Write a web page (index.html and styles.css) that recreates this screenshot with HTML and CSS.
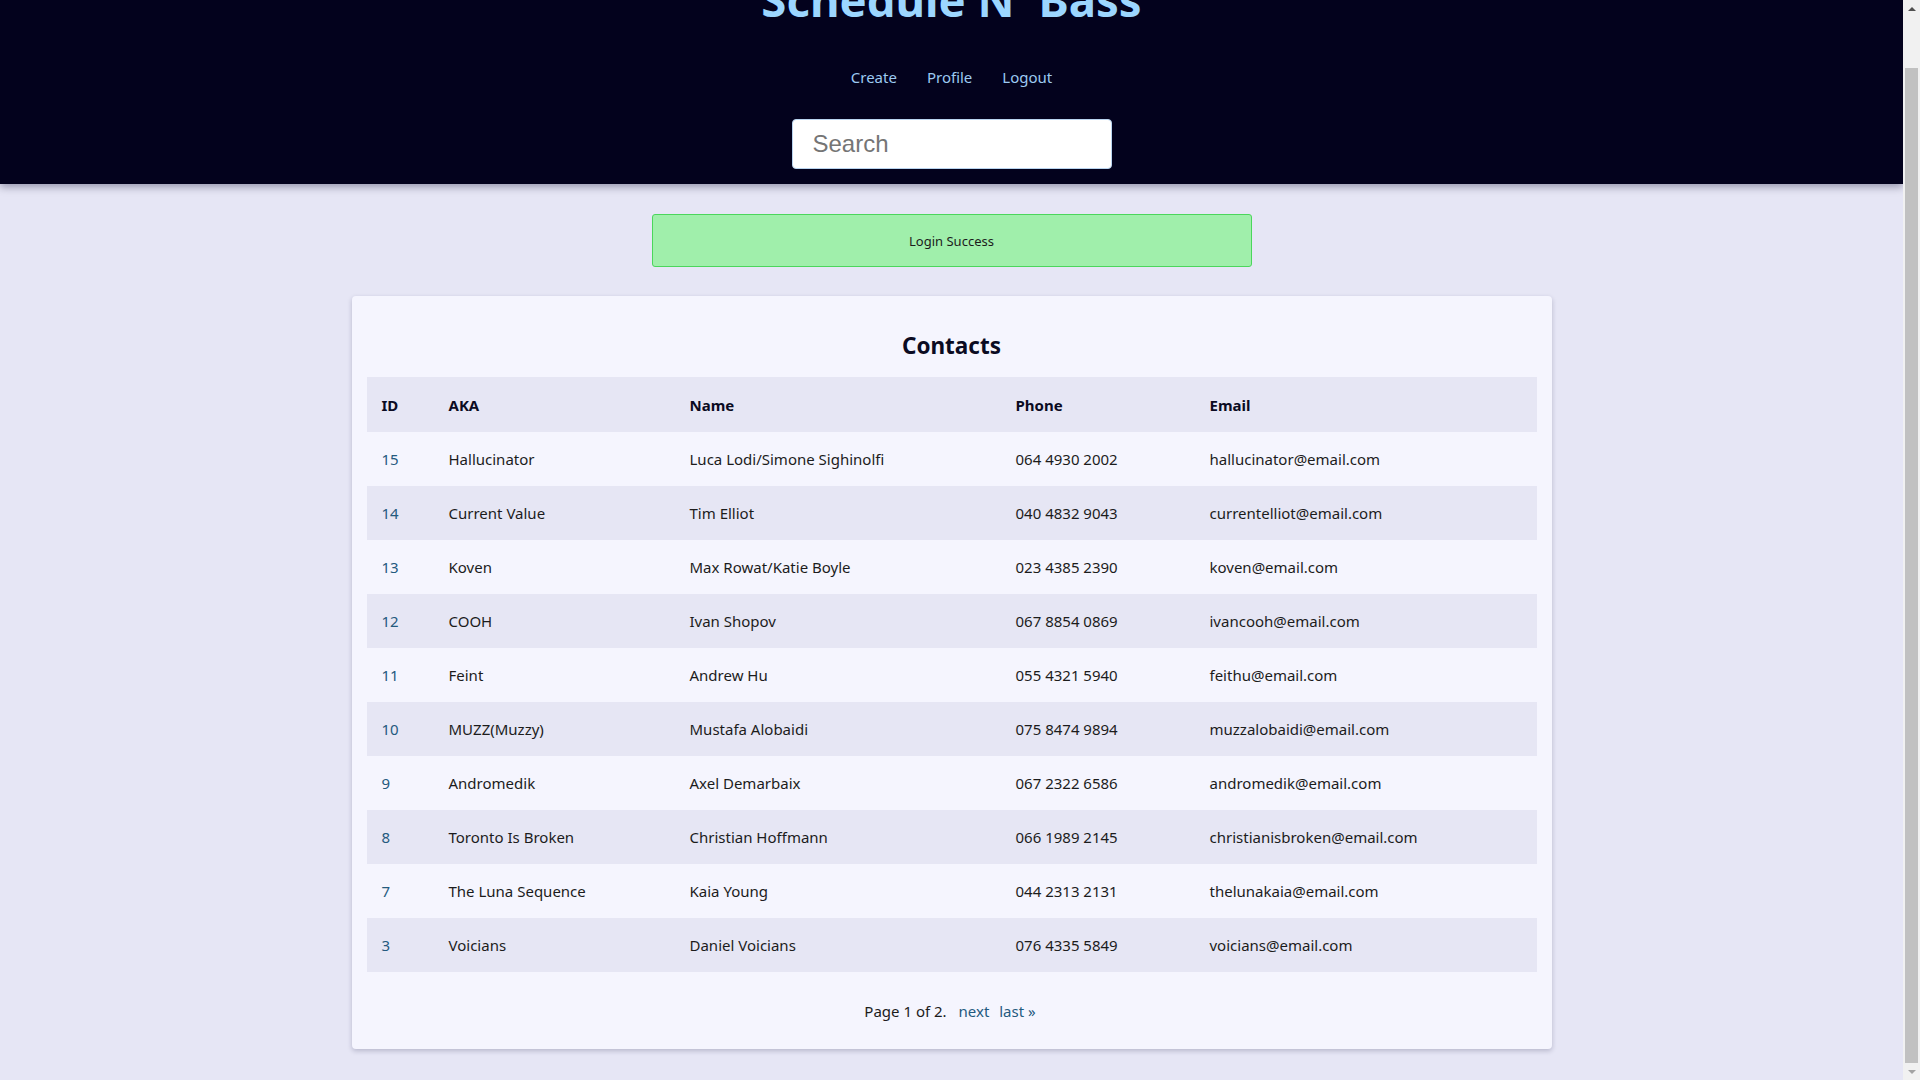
FILE: index.html
```html
<!DOCTYPE html>
<html lang="en">
<head>
<meta charset="utf-8">
<title>Schedule N' Bass</title>
<link rel="stylesheet" href="styles.css">
</head>
<body>
<header class="site-header">
  <h1 class="site-title">Schedule N' Bass</h1>
  <nav class="site-nav">
    <a href="#">Create</a>
    <a href="#">Profile</a>
    <a href="#">Logout</a>
  </nav>
  <form class="search-form">
    <input class="search-input" type="text" placeholder="Search">
  </form>
</header>
<main class="main">
  <div class="alert-success">Login Success</div>
  <section class="card">
    <h2 class="card-title">Contacts</h2>
    <table class="contacts">
      <colgroup>
        <col class="c-id"><col class="c-aka"><col class="c-name"><col class="c-phone"><col class="c-email">
      </colgroup>
      <thead>
        <tr><th>ID</th><th>AKA</th><th>Name</th><th>Phone</th><th>Email</th></tr>
      </thead>
      <tbody>
        <tr><td><a href="#">15</a></td><td>Hallucinator</td><td>Luca Lodi/Simone Sighinolfi</td><td>064 4930 2002</td><td>hallucinator@email.com</td></tr>
        <tr><td><a href="#">14</a></td><td>Current Value</td><td>Tim Elliot</td><td>040 4832 9043</td><td>currentelliot@email.com</td></tr>
        <tr><td><a href="#">13</a></td><td>Koven</td><td>Max Rowat/Katie Boyle</td><td>023 4385 2390</td><td>koven@email.com</td></tr>
        <tr><td><a href="#">12</a></td><td>COOH</td><td>Ivan Shopov</td><td>067 8854 0869</td><td>ivancooh@email.com</td></tr>
        <tr><td><a href="#">11</a></td><td>Feint</td><td>Andrew Hu</td><td>055 4321 5940</td><td>feithu@email.com</td></tr>
        <tr><td><a href="#">10</a></td><td>MUZZ(Muzzy)</td><td>Mustafa Alobaidi</td><td>075 8474 9894</td><td>muzzalobaidi@email.com</td></tr>
        <tr><td><a href="#">9</a></td><td>Andromedik</td><td>Axel Demarbaix</td><td>067 2322 6586</td><td>andromedik@email.com</td></tr>
        <tr><td><a href="#">8</a></td><td>Toronto Is Broken</td><td>Christian Hoffmann</td><td>066 1989 2145</td><td>christianisbroken@email.com</td></tr>
        <tr><td><a href="#">7</a></td><td>The Luna Sequence</td><td>Kaia Young</td><td>044 2313 2131</td><td>thelunakaia@email.com</td></tr>
        <tr><td><a href="#">3</a></td><td>Voicians</td><td>Daniel Voicians</td><td>076 4335 5849</td><td>voicians@email.com</td></tr>
      </tbody>
    </table>
    <div class="pagination">
      <span class="current">Page 1 of 2.</span>
      <a href="#">next</a>
      <a href="#">last &raquo;</a>
    </div>
  </section>
</main>
<div class="scrollbar" aria-hidden="true">
  <div class="sb-btn sb-up"><span class="arrow-up"></span></div>
  <div class="sb-track"><div class="sb-thumb"></div></div>
  <div class="sb-btn sb-down"><span class="arrow-down"></span></div>
</div>
<script src="script.js"></script>
</body>
</html>
```
FILE: styles.css
```css
html, body {
  margin: 0;
  padding: 0;
}
body {
  background: #e6e6f5;
  font-family: "Noto Sans", "Open Sans", sans-serif;
  font-size: 16px;
  color: #1c1c1c;
  margin-right: 17px;
}
a {
  text-decoration: none;
}
.site-header {
  background: #03021d;
  padding: 22px 0 15px;
  text-align: center;
  box-shadow: 0 3px 8px rgba(0, 0, 40, 0.35);
  position: relative;
  z-index: 1;
}
.site-title {
  margin: 0;
  font-size: 45.5px;
  line-height: 64px;
  font-weight: 700;
  color: #9cd6ff;
}
.site-nav {
  margin-top: 35px;
  display: flex;
  justify-content: center;
  gap: 30px;
  line-height: 22px;
  font-size: 15px;
}
.site-nav a {
  color: #9ccaf2;
}
.search-form {
  margin: 31px 0 0;
  display: flex;
  justify-content: center;
}
.search-input {
  box-sizing: border-box;
  width: 320px;
  height: 50px;
  padding: 0 20px;
  border: 1px solid #b9d4ef;
  border-radius: 4px;
  background: #fff;
  font-family: "Liberation Sans", Arial, sans-serif;
  font-size: 24px;
  color: #222;
  outline: none;
}
.search-input::placeholder {
  color: #757575;
}
.main {
  padding: 30px 0 31px;
  display: flex;
  flex-direction: column;
  align-items: center;
}
.alert-success {
  box-sizing: border-box;
  width: 600px;
  height: 53px;
  margin-bottom: 29px;
  background: #a0efab;
  border: 1px solid #4bd65c;
  border-radius: 3px;
  display: flex;
  align-items: center;
  justify-content: center;
  font-size: 13px;
  color: #1c1c1c;
}
.card {
  box-sizing: border-box;
  width: 1200px;
  padding: 15px 15px 15px;
  background: #f5f5fe;
  border-radius: 4px;
  box-shadow: 0 2px 5px rgba(20, 20, 60, 0.22);
}
.card-title {
  margin: 19px 0 15px;
  text-align: center;
  font-size: 22.5px;
  line-height: 32px;
  font-weight: 700;
  color: #0b0b22;
}
.contacts {
  width: 100%;
  border-collapse: collapse;
  table-layout: fixed;
}
.c-id { width: 67px; }
.c-aka { width: 241px; }
.c-name { width: 326px; }
.c-phone { width: 194px; }
.c-email { width: 342px; }
.contacts th,
.contacts td {
  padding: 16px 15px;
  line-height: 22px;
  text-align: left;
  font-size: 15px;
  white-space: nowrap;
}
.contacts th {
  font-weight: 700;
  color: #0b0b22;
  background: #e6e6f4;
  padding-top: 17px;
}
.contacts tbody tr:nth-child(even) td {
  background: #e6e6f4;
}
.contacts td a {
  color: #245a7e;
}
.pagination {
  padding: 28px 0 12px;
  text-align: center;
  line-height: 22px;
  font-size: 15px;
  color: #1c1c1c;
}
.pagination .current {
  margin-right: 5px;
}
.pagination a {
  color: #245a7e;
  margin: 0 3px;
}
.scrollbar {
  position: fixed;
  top: 0;
  right: 0;
  width: 17px;
  height: 100vh;
  background: #f1f1f1;
  display: flex;
  flex-direction: column;
  z-index: 10;
}
.sb-btn {
  height: 17px;
  display: flex;
  align-items: center;
  justify-content: center;
}
.arrow-up {
  width: 0;
  height: 0;
  border-left: 4px solid transparent;
  border-right: 4px solid transparent;
  border-bottom: 4px solid #505050;
}
.arrow-down {
  width: 0;
  height: 0;
  border-left: 4px solid transparent;
  border-right: 4px solid transparent;
  border-top: 4px solid #a3a3a3;
}
.sb-track {
  flex: 1;
  display: flex;
  flex-direction: column;
  padding: 51px 2px 0;
}
.sb-thumb {
  flex: 1;
  background: #c1c1c1;
}
```
FILE: script.js
```js
window.scrollTo(0, document.documentElement.scrollHeight);
```
